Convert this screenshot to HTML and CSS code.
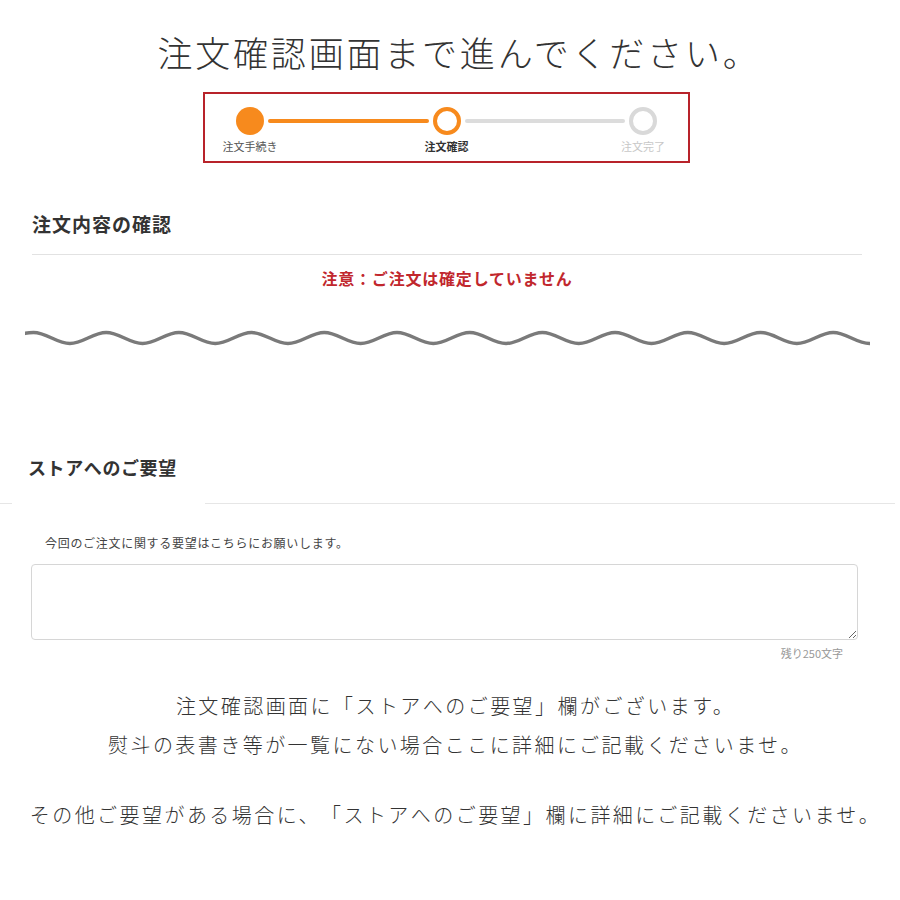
FILE: index.html
```html
<!DOCTYPE html>
<html lang="ja">
<head>
  <meta charset="UTF-8">
  <title>注文確認画面まで進んでください。</title>
  <link rel="stylesheet" href="styles.css">
</head>
<body>
  <div class="page">
    <h1 class="page-title">注文確認画面まで進んでください。</h1>

    <div class="stepper">
      <div class="step-circles">
        <span class="dot done"></span>
        <span class="bar active"></span>
        <span class="dot current"></span>
        <span class="bar"></span>
        <span class="dot todo"></span>
      </div>
      <div class="step-labels">
        <span class="step-label">注文手続き</span>
        <span class="step-label current">注文確認</span>
        <span class="step-label todo">注文完了</span>
      </div>
    </div>

    <div class="order-check">
      <div class="section-head">
        <h2>注文内容の確認</h2>
      </div>
      <p class="notice">注意：ご注文は確定していません</p>
    </div>

    <!-- the rest of the order summary is cut off here -->
    <svg class="wave" width="845" height="20" viewBox="0 0 845 20">
      <path d="M0 5.4 Q4 4.5 8.5 4.5 C21.6 4.5 31.8 15.5 44.85 15.5
               s23.26 -11 36.35 -11 s23.26 11 36.35 11
               s23.26 -11 36.35 -11 s23.26 11 36.35 11
               s23.26 -11 36.35 -11 s23.26 11 36.35 11
               s23.26 -11 36.35 -11 s23.26 11 36.35 11
               s23.26 -11 36.35 -11 s23.26 11 36.35 11
               s23.26 -11 36.35 -11 s23.26 11 36.35 11
               s23.26 -11 36.35 -11 s23.26 11 36.35 11
               s23.26 -11 36.35 -11 s23.26 11 36.35 11
               s23.26 -11 36.35 -11 s23.26 11 36.35 11
               s23.26 -11 36.35 -11 s23.26 11 36.35 11
               s23.26 -11 36.35 -11 s23.26 11 36.35 11"
            fill="none" stroke="#7a7a7a" stroke-width="3.5" stroke-linecap="round"/>
    </svg>

    <div class="store-head">
      <h2>ストアへのご要望</h2>
    </div>

    <div class="request-form">
      <p class="request-hint">今回のご注文に関する要望はこちらにお願いします。</p>
      <textarea class="request-input" maxlength="250"></textarea>
      <div class="request-count">残り250文字</div>
    </div>

    <p class="guide">注文確認画面に「ストアへのご要望」欄がございます。<br>熨斗の表書き等が一覧にない場合ここに詳細にご記載くださいませ。</p>
    <p class="guide guide-last">その他ご要望がある場合に、「ストアへのご要望」欄に詳細にご記載くださいませ。</p>
  </div>
</body>
</html>
```

FILE: styles.css
```css
body {
  margin: 0;
  background: #fff;
  color: #333;
  font-family: "Noto Sans CJK JP", "Noto Sans", sans-serif;
}

.page {
  width: 900px;
  padding-top: 28px;
}

.page-title {
  margin: 0;
  padding-left: 18px;
  font-size: 35px;
  line-height: 47px;
  font-weight: 300;
  letter-spacing: 2.8px;
  text-align: center;
  color: #333;
}

/* progress steps */
.stepper {
  width: 421px;
  margin: 17px 0 0 203px;
  padding: 13px 31px 8px;
  border: 2px solid #b8232a;
}

.step-circles {
  display: flex;
  align-items: center;
  gap: 4px;
}

.dot {
  width: 28px;
  height: 28px;
  box-sizing: border-box;
  border-radius: 50%;
  flex: none;
}

.dot.done {
  background: #f78a1d;
}

.dot.current {
  border: 4px solid #f78a1d;
}

.dot.todo {
  border: 4px solid #d9d9d9;
}

.bar {
  flex: 1;
  height: 4px;
  border-radius: 2px;
  background: #dcdcdc;
}

.bar.active {
  background: #f78a1d;
}

.step-labels {
  display: flex;
  justify-content: space-between;
  margin: 4px -26px 0;
}

.step-label {
  width: 80px;
  font-size: 11px;
  line-height: 14px;
  text-align: center;
  color: #555;
}

.step-label.current {
  font-weight: bold;
  color: #333;
}

.step-label.todo {
  color: #c8c8c8;
}

/* order summary */
.order-check {
  margin: 48px 38px 0 32px;
}

.section-head {
  padding-bottom: 17px;
  border-bottom: 1px solid #e2e2e2;
}

.section-head h2 {
  margin: 0;
  font-size: 19px;
  line-height: 26px;
  letter-spacing: 1px;
  color: #333;
}

.notice {
  margin: 12px 0 0;
  font-size: 16px;
  line-height: 22px;
  font-weight: bold;
  letter-spacing: 0.8px;
  text-align: center;
  color: #c1272d;
}

.wave {
  display: block;
  margin: 39px 0 0 25px;
}

/* store request */
.store-head {
  width: 895px;
  margin-top: 92px;
  border-bottom: 1px solid #e6e6e6;
}

.store-head h2 {
  display: inline-block;
  margin: 0 0 -3px 12px;
  padding: 14px 28px 26px 16px;
  background: #fff;
  font-size: 18px;
  line-height: 26px;
  letter-spacing: 0.6px;
  color: #333;
}

.request-form {
  margin: 30px 42px 0 31px;
}

.request-hint {
  margin: 0 0 12px 14px;
  font-size: 12px;
  line-height: 18px;
  letter-spacing: 0.7px;
  color: #444;
}

.request-input {
  display: block;
  width: 100%;
  height: 76px;
  box-sizing: border-box;
  border: 1px solid #d6d6d6;
  border-radius: 4px;
  font-family: inherit;
  font-size: 14px;
  resize: vertical;
}

.request-count {
  margin-top: 5px;
  padding-right: 15px;
  font-size: 11px;
  line-height: 16px;
  text-align: right;
  color: #999;
}

.guide {
  margin: 25px 0 0;
  padding-left: 11px;
  font-size: 20px;
  line-height: 39px;
  font-weight: 300;
  letter-spacing: 2.45px;
  text-align: center;
  text-spacing-trim: space-all;
  color: #333;
}

.guide-last {
  margin-top: 31px;
}
```
